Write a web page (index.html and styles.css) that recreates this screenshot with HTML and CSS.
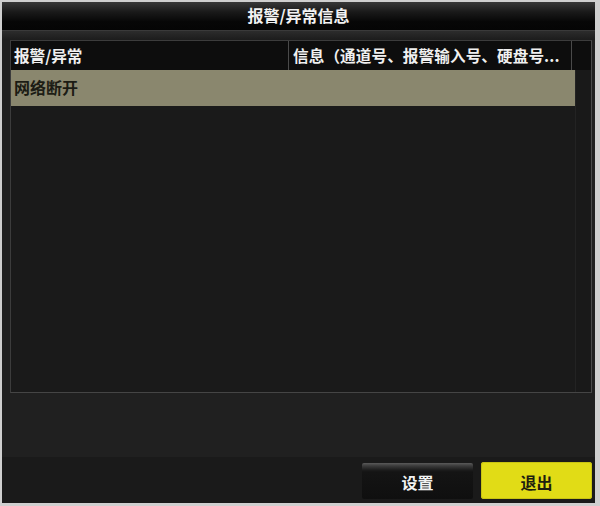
FILE: index.html
```html
<!DOCTYPE html>
<html lang="zh-CN">
<head>
<meta charset="utf-8">
<title>报警/异常信息</title>
<link rel="stylesheet" href="styles.css">
</head>
<body>
<div class="window">
  <div class="titlebar">报警/异常信息</div>
  <div class="band"></div>
  <div class="content">
    <div class="table">
      <div class="thead">
        <div class="th col1">报警/异常</div>
        <div class="th col2">信息（通道号、报警输入号、硬盘号...</div>
        <div class="th col3"></div>
      </div>
      <div class="tbody">
        <div class="rows">
          <div class="row selected">网络断开</div>
        </div>
        <div class="scroll"></div>
      </div>
    </div>
    <div class="spacer"></div>
  </div>
  <div class="footer">
    <button class="btn btn-dark">设置</button>
    <button class="btn btn-yellow">退出</button>
  </div>
</div>
</body>
</html>
```

FILE: styles.css
```css
html, body {
  margin: 0;
  padding: 0;
}
body {
  width: 600px;
  height: 506px;
  background: #cfcfcf;
  font-family: "Noto Sans CJK SC", "Noto Sans", sans-serif;
  overflow: hidden;
}
.window {
  margin: 2px 5px 0 2px;
  width: 593px;
  height: 501px;
  background: #202020;
  display: flex;
  flex-direction: column;
}
.titlebar {
  height: 28px;
  line-height: 27px;
  text-align: center;
  color: #f2f2f2;
  font-size: 16px;
  font-weight: bold;
  background: linear-gradient(#383838 0%, #1a1a1a 35%, #070707 70%, #050505 100%);
}
.band {
  height: 10px;
  background: linear-gradient(#2c2c2c, #1c1c1c);
  border-top: 1px solid #3a3a3a;
  box-sizing: border-box;
}
.content {
  padding: 0 3px 0 8px;
  display: flex;
  flex-direction: column;
}
.table {
  height: 353px;
  border: 1px solid #3c3c3c;
  border-right-color: #4a4a4a;
  border-bottom-color: #454545;
  box-sizing: border-box;
  background: #1a1a1a;
  display: flex;
  flex-direction: column;
}
.thead {
  height: 29px;
  display: flex;
  background: #0d0d0d;
}
.th {
  color: #f0f0f0;
  font-size: 15.6px;
  font-weight: bold;
  line-height: 28px;
  padding-left: 3px;
  white-space: nowrap;
  overflow: hidden;
  box-sizing: border-box;
}
.col1 {
  width: 278px;
  border-right: 1px solid #4a4a4a;
}
.col2 {
  width: 283px;
  padding-left: 4px;
  border-right: 1px solid #4a4a4a;
  letter-spacing: 0.1px;
}
.col3 {
  flex: 1;
}
.tbody {
  flex: 1;
  display: flex;
}
.rows {
  width: 564px;
}
.row {
  height: 36px;
  line-height: 34px;
  padding-left: 3px;
  font-size: 16px;
  font-weight: bold;
  color: #1c1c14;
}
.row.selected {
  background: #8a876e;
}
.scroll {
  flex: 1;
  background: #191919;
  border-left: 1px solid #232323;
}
.spacer {
  height: 64px;
}
.footer {
  flex: 1;
  background: #1a1a1a;
  display: flex;
  justify-content: flex-end;
  align-items: flex-start;
  gap: 8px;
  padding: 5px 3px 0 0;
}
.btn {
  width: 111px;
  height: 37px;
  border: none;
  font-family: "Noto Sans CJK SC", "Noto Sans", sans-serif;
  font-size: 16px;
  font-weight: bold;
  padding: 0;
  padding-top: 2px;
  cursor: pointer;
}
.btn-dark {
  margin-top: 1px;
  height: 36px;
  color: #f2f2f2;
  background: linear-gradient(#5a5a5a 0px, #3a3a3a 3px, #1c1c1c 7px, #141414 9px, #0f0f0f 100%);
  border-radius: 2px;
}
.btn-yellow {
  color: #1e1e10;
  background: #e1dc16;
  border-radius: 3px;
  box-shadow: inset 0 0 0 1px #c9c412;
}
```
